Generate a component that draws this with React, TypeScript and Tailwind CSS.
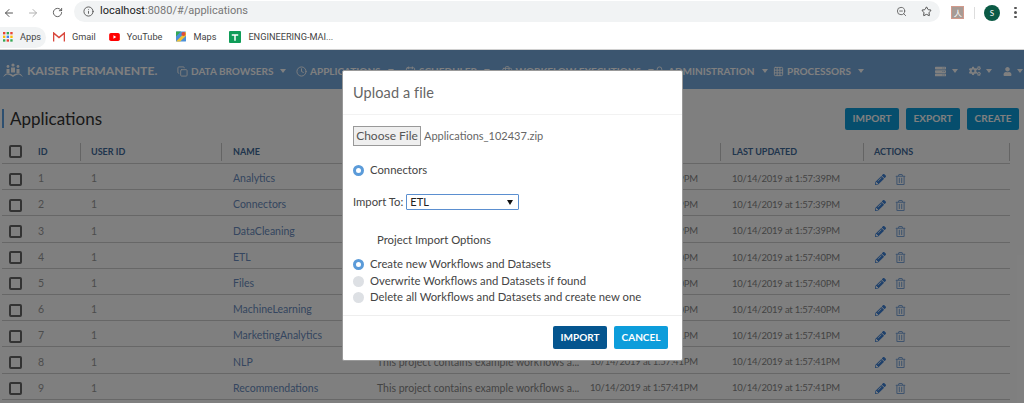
import React from "react";
import { ArrowLeft, ArrowRight, RotateCw, Info, ZoomOut, Star, Copy, Clock, CalendarDays, Briefcase, Lock, Grid3x3 } from "lucide-react";
import { FaPencilAlt, FaRegTrashAlt, FaCogs, FaUser, FaServer } from "react-icons/fa";

const rows = [
  ["1", "Analytics", "39"],
  ["2", "Connectors", "39"],
  ["3", "DataCleaning", "39"],
  ["4", "ETL", "40"],
  ["5", "Files", "40"],
  ["6", "MachineLearning", "40"],
  ["7", "MarketingAnalytics", "41"],
  ["8", "NLP", "41"],
  ["9", "Recommendations", "41"],
];

const gridCols = "grid grid-cols-[28px_51px_141px_144px_213px_142px_143px_146px] items-center";

const Caret = ({ className }: { className?: string }) => (
  <span className={`w-0 h-0 border-x-[3px] border-x-transparent border-t-[4px] border-t-white ${className ?? "ml-[7px]"}`} />
);

const NavItem = ({ icon, label, className }: { icon: React.ReactNode; label: string; className: string }) => (
  <div className={`flex items-center text-[10px] font-bold text-white whitespace-nowrap ${className}`}>
    {icon}
    <span className="ml-[3px]">{label}</span>
    <Caret />
  </div>
);

const Radio = ({ on }: { on?: boolean }) =>
  on ? (
    <span className="w-[11px] h-[11px] rounded-full border-[3px] border-[#5b9bd9] bg-white shrink-0" />
  ) : (
    <span className="w-[11px] h-[11px] rounded-full bg-[#dde0e4] shrink-0" />
  );

const Bookmark = ({ icon, label, className }: { icon: React.ReactNode; label: string; className?: string }) => (
  <div className={`flex items-center gap-[7px] text-[9.2px] text-[#444] whitespace-nowrap ${className ?? ""}`}>
    {icon}
    <span>{label}</span>
  </div>
);

const HeaderCell = ({ label, className }: { label: string; className: string }) => (
  <div className={`h-[18px] flex items-center border-r border-[#c8c8c8] text-[9px] font-bold text-[#3f6a9a] ${className}`}>{label}</div>
);

export default function App() {
  return (
    <div className="w-[1024px] h-[403px] overflow-hidden flex flex-col bg-white font-['Lato',sans-serif]">
      {/* browser chrome */}
      <div className="h-[25px] flex items-center shrink-0 pl-[3px]">
        <ArrowLeft size={12} className="text-[#555]" />
        <ArrowRight size={12} className="text-[#b0b0b0] ml-[12px]" />
        <RotateCw size={11} className="text-[#555] ml-[13px]" />
        <div className="ml-[11px] w-[866px] h-[21px] mb-[2px] rounded-full bg-[#f1f3f4] flex items-center pl-[9px] pr-[8px]">
          <Info size={11} className="text-[#555]" />
          <span className="ml-[6px] text-[11px] text-[#222] font-['Roboto',sans-serif]">
            localhost<span className="text-[#777]">:8080/#/applications</span>
          </span>
          <ZoomOut size={11} className="ml-auto text-[#666]" />
          <Star size={11} className="ml-[14px] text-[#444]" />
        </div>
        <div className="ml-[11px] w-[13px] h-[13px] bg-[#a79b95] border border-[#d39a8c] flex items-center justify-center text-[8px] text-white">人</div>
        <div className="ml-[10px] w-px h-[12px] bg-[#ddd]" />
        <div className="ml-[9px] w-[16px] h-[16px] rounded-full bg-[#0b5a45] text-white text-[8px] flex items-center justify-center">S</div>
        <div className="ml-[14px] flex flex-col gap-[2px]">
          <span className="w-[3px] h-[2.5px] rounded-full bg-[#555]" />
          <span className="w-[3px] h-[2.5px] rounded-full bg-[#555]" />
          <span className="w-[3px] h-[2.5px] rounded-full bg-[#555]" />
        </div>
      </div>
      <div className="h-[24px] flex items-center shrink-0 border-b border-[#d0d0d0] box-content font-['Roboto',sans-serif]">
        <div className="h-[21px] w-[46px] rounded-r-full bg-[#f1f3f4] flex items-center pl-[3px]">
          <Bookmark
            label="Apps"
            icon={
              <svg width="10" height="10" viewBox="0 0 11 11">
                {[0, 4, 8].flatMap((y, r) =>
                  [0, 4, 8].map((x, c) => (
                    <rect key={`${x}-${y}`} x={x} y={y} width="2.6" height="2.6" fill={["#ea4335", "#fbbc05", "#34a853", "#4285f4"][(r + c * 2) % 4]} />
                  ))
                )}
              </svg>
            }
          />
        </div>
        <Bookmark
          className="ml-[7px]"
          label="Gmail"
          icon={
            <svg width="12" height="10" viewBox="0 0 12 10">
              <path d="M0.5 9.5V1L6 5.5 11.5 1v8.5" fill="none" stroke="#d9473c" strokeWidth="1.6" />
            </svg>
          }
        />
        <Bookmark
          className="ml-[13px]"
          label="YouTube"
          icon={
            <svg width="11" height="8" viewBox="0 0 12 9">
              <rect width="12" height="9" rx="2" fill="#f00" />
              <path d="M4.8 2.5v4L8 4.5z" fill="#fff" />
            </svg>
          }
        />
        <Bookmark
          className="ml-[14px]"
          label="Maps"
          icon={
            <svg width="10" height="11" viewBox="0 0 12 12">
              <rect width="12" height="12" rx="1" fill="#4a90d9" />
              <path d="M0 12 12 0v5L5 12z" fill="#f1c232" />
              <path d="M0 0h6L0 6z" fill="#34a853" />
              <circle cx="9" cy="3" r="2.5" fill="#e04b3a" />
            </svg>
          }
        />
        <Bookmark
          className="ml-[13px]"
          label="ENGINEERING-MAI..."
          icon={
            <svg width="12" height="12" viewBox="0 0 13 13">
              <rect width="13" height="13" rx="1" fill="#0f9d58" />
              <path d="M3 3.5h7v1.6H7.3V10.5H5.7V5.100H3z" fill="#fff" />
            </svg>
          }
        />
      </div>

      {/* app page under a modal backdrop */}
      <div className="relative flex-1 overflow-hidden bg-white">
        <nav className="h-[39px] bg-[#76aadf] flex items-center pt-[3px]">
          <svg width="20" height="14" viewBox="0 0 20 14" className="ml-[3px] mb-[2px] text-white" fill="currentColor">
            <circle cx="10" cy="2" r="1.6" />
            <path d="M8 4.500h4v5H8z" />
            <circle cx="5" cy="3.500" r="1.400" />
            <path d="M3.500 6h3v4h-3z" />
            <circle cx="15" cy="3.500" r="1.400" />
            <path d="M13.500 6h3v4h-3z" />
            <path d="M0 14c3-5 6-4 10-2 4-2 7-3 10 2l-3-2c-2-1-4 0-7 2-3-2-5-3-7-2z" />
          </svg>
          <span className="ml-[4px] w-[150px] text-[12.2px] font-bold text-white whitespace-nowrap">KAISER PERMANENTE.</span>
          <NavItem className="w-[119px]" icon={<Copy size={11} />} label="DATA BROWSERS" />
          <NavItem className="w-[109px]" icon={<Clock size={11} />} label="APPLICATIONS" />
          <NavItem className="w-[97px]" icon={<CalendarDays size={11} />} label="SCHEDULER" />
          <NavItem className="w-[152px]" icon={<Briefcase size={12} />} label="WORKFLOW EXECUTIONS" />
          <NavItem className="w-[119px]" icon={<Lock size={11} />} label="ADMINISTRATION" />
          <NavItem className="w-[162px]" icon={<Grid3x3 size={11} />} label="PROCESSORS" />
          <div className="flex items-center text-white">
            <FaServer size={11} />
            <Caret className="ml-[6px]" />
            <FaCogs size={12} className="ml-[11px]" />
            <Caret className="ml-[5px]" />
            <FaUser size={9} className="ml-[11px]" />
            <Caret className="ml-[5px]" />
          </div>
        </nav>

        <div className="h-[46px] flex items-center pl-[2px] pr-[5px] pt-[13px]">
          <div className="w-[2px] h-[19px] bg-[#5a9fe0]" />
          <h1 className="ml-[6px] text-[17px] text-[#333]">Applications</h1>
          <div className="ml-auto flex gap-[7px] text-[10px] font-bold text-white">
            <button className="w-[54px] h-[22px] rounded-[2px] bg-[#0d9ddb]">IMPORT</button>
            <button className="w-[54px] h-[22px] rounded-[2px] bg-[#0d9ddb]">EXPORT</button>
            <button className="w-[52px] h-[22px] rounded-[2px] bg-[#0d9ddb]">CREATE</button>
          </div>
        </div>

        <div className="ml-[2px] w-[1008px]">
          <div className={`${gridCols} h-[29px] pt-[5px] border-b border-[#cfcfcf]`}>
            <span className="ml-[7px] w-[13px] h-[13px] rounded-[2px] border-2 border-[#666]" />
            <HeaderCell label="ID" className="pl-[8px]" />
            <HeaderCell label="USER ID" className="pl-[10px]" />
            <HeaderCell label="NAME" className="pl-[11px]" />
            <HeaderCell label="DESCRIPTION" className="pl-[11px]" />
            <HeaderCell label="CREATED" className="pl-[11px]" />
            <HeaderCell label="LAST UPDATED" className="pl-[11px]" />
            <HeaderCell label="ACTIONS" className="pl-[10px]" />
          </div>
          {rows.map(([id, name, sec]) => (
            <div key={id} className={`${gridCols} h-[26.2px] pt-[5px] border-b border-[#cfcfcf] text-[10.5px] text-[#999]`}>
              <span className="ml-[7px] w-[13px] h-[13px] rounded-[2px] border-2 border-[#666]" />
              <div className="pl-[8px]">{id}</div>
              <div className="pl-[10px]">1</div>
              <div className="pl-[11px] text-[#6a8cc0]">{name}</div>
              <div className="pl-[11px] text-[#888] whitespace-nowrap">This project contains example workflows a...</div>
              <div className="pl-[11px] text-[#888] text-[9.5px] tracking-[-0.2px] whitespace-nowrap">10/14/2019 at 1:57:{sec}PM</div>
              <div className="pl-[11px] text-[#888] text-[9.5px] tracking-[-0.2px] whitespace-nowrap">10/14/2019 at 1:57:{sec}PM</div>
              <div className="pl-[11px] flex items-center gap-[9px] text-[#3f82d6]">
                <FaPencilAlt size={11} />
                <FaRegTrashAlt size={11} className="text-[#7ea8dc]" />
              </div>
            </div>
          ))}
        </div>

        <div className="absolute inset-0 bg-black/50" />

        <div className="absolute left-[342px] top-[20px] w-[341px] h-[291px] bg-white rounded-[2px] border border-[#999] flex flex-col text-[#444]">
          <div className="h-[44px] flex items-center pl-[10px] border-b border-[#f2f2f2] text-[14.5px] tracking-[0.1px] text-[#666]">Upload a file</div>
          <div className="flex-1 pl-[10px] text-[11.3px]">
            <div className="mt-[11px] flex items-center">
              <button className="w-[68px] h-[20px] bg-[#efefef] border border-[#999] text-[12px] text-[#555]">Choose File</button>
              <span className="ml-[3px] text-[#666] text-[11px]">Applications_102437.zip</span>
            </div>
            <div className="mt-[16px] h-[16px] flex items-center gap-[6px]">
              <Radio on />
              <span>Connectors</span>
            </div>
            <div className="mt-[16px] flex items-center">
              <span>Import To:</span>
              <div className="ml-[3px] w-[113px] h-[16px] border border-[#5b8fd0] rounded-[1px] flex items-center justify-between pl-[3px] pr-[5px] text-[11px] text-[#222]">
                <span>ETL</span>
                <span className="w-0 h-0 border-x-[3px] border-x-transparent border-t-[5px] border-t-[#111]" />
              </div>
            </div>
            <div className="mt-[21px] ml-[24px]">Project Import Options</div>
            <div className="mt-[8px] flex flex-col gap-[0.5px]">
              <div className="h-[16px] flex items-center gap-[6px]">
                <Radio on />
                <span>Create new Workflows and Datasets</span>
              </div>
              <div className="h-[16px] flex items-center gap-[6px]">
                <Radio />
                <span>Overwrite Workflows and Datasets if found</span>
              </div>
              <div className="h-[16px] flex items-center gap-[6px]">
                <Radio />
                <span>Delete all Workflows and Datasets and create new one</span>
              </div>
            </div>
          </div>
          <div className="h-[45px] border-t border-[#eee] flex items-start justify-end gap-[7px] pt-[10px] pr-[14px] text-[10px] font-bold text-white">
            <button className="w-[54px] h-[23px] rounded-[2px] bg-[#04558f]">IMPORT</button>
            <button className="w-[54px] h-[23px] rounded-[2px] bg-[#0d9ddb]">CANCEL</button>
          </div>
        </div>
      </div>
    </div>
  );
}
